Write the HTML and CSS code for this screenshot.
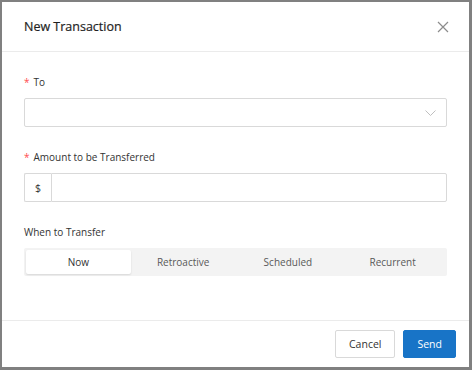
FILE: index.html
```html
<!DOCTYPE html>
<html lang="en">
<head>
  <meta charset="UTF-8">
  <title>New Transaction</title>
  <link rel="stylesheet" href="styles.css">
</head>
<body>

  <div class="modal">
    <!-- Header -->
    <div class="modal-header">
      <h2>New Transaction</h2>
      <span class="close-btn">
        <svg width="12" height="12" viewBox="0 0 12 12"><path d="M1 1L11 11M11 1L1 11" stroke="#8c8c8c" stroke-width="1.2" fill="none"/></svg>
      </span>
    </div>

    <!-- Form -->
    <div class="modal-body">
      <div class="form-item">
        <label><span class="req">*</span>To</label>
        <div class="select">
          <svg width="11" height="6" viewBox="0 0 11 6"><path d="M0.5 0.5L5.5 5.5L10.5 0.5" stroke="#bfbfbf" stroke-width="1" fill="none"/></svg>
        </div>
      </div>

      <div class="form-item">
        <label><span class="req">*</span>Amount to be Transferred</label>
        <div class="input-group">
          <span class="addon">$</span>
          <span class="input"></span>
        </div>
      </div>

      <div class="form-item">
        <label>When to Transfer</label>
        <div class="segmented">
          <span class="seg active">Now</span>
          <span class="seg">Retroactive</span>
          <span class="seg">Scheduled</span>
          <span class="seg">Recurrent</span>
        </div>
      </div>
    </div>

    <!-- Footer -->
    <div class="modal-footer">
      <button class="btn">Cancel</button>
      <button class="btn primary">Send</button>
    </div>
  </div>

</body>
</html>
```

FILE: styles.css
```css
* {
  margin: 0;
  padding: 0;
  box-sizing: border-box;
}

body {
  font-family: 'Open Sans', 'Noto Sans', sans-serif;
  background: #808080;
  padding: 2px 3px 3px 2px;
  height: 370px;
  color: #333;
}

.modal {
  background: #fff;
  height: 365px;
  display: flex;
  flex-direction: column;
}

/* Header */
.modal-header {
  height: 50px;
  display: flex;
  justify-content: space-between;
  align-items: center;
  padding: 0 20px 0 22px;
  border-bottom: 1px solid #ebebeb;
}

.modal-header h2 {
  font-size: 12.5px;
  font-weight: 500;
  color: #1f1f1f;
  -webkit-text-stroke: 0.2px #1f1f1f;
}

.close-btn {
  display: flex;
  cursor: pointer;
}

/* Body */
.modal-body {
  flex: 1;
  padding: 21px 22px 0 22px;
}

.form-item {
  margin-bottom: 21px;
}

.form-item label {
  display: block;
  font-size: 10px;
  line-height: 18px;
  color: #333;
  margin-bottom: 7px;
}

.req {
  color: #ff4d4f;
  margin-right: 4px;
}

.select {
  height: 29px;
  border: 1px solid #d9d9d9;
  border-radius: 2px;
  display: flex;
  align-items: center;
  justify-content: flex-end;
  padding-right: 10px;
}

.input-group {
  height: 29px;
  display: flex;
}

.addon {
  width: 27px;
  border: 1px solid #d9d9d9;
  border-right: none;
  border-radius: 2px 0 0 2px;
  display: flex;
  align-items: center;
  justify-content: center;
  font-size: 10.5px;
  color: #333;
}

.input {
  flex: 1;
  border: 1px solid #d9d9d9;
  border-radius: 0 2px 2px 0;
}

.segmented {
  height: 28px;
  background: #f3f3f3;
  border-radius: 2px;
  padding: 2px;
  display: grid;
  grid-template-columns: repeat(4, 1fr);
}

.seg {
  display: flex;
  align-items: center;
  justify-content: center;
  font-size: 10px;
  color: #595959;
  border-radius: 2px;
}

.seg.active {
  background: #fff;
  color: #333;
  box-shadow: 0 1px 2px rgba(0, 0, 0, 0.12);
}

/* Footer */
.modal-footer {
  height: 47px;
  border-top: 1px solid #ebebeb;
  display: flex;
  justify-content: flex-end;
  align-items: center;
  gap: 8px;
  padding: 0 13px;
}

.btn {
  font-family: inherit;
  height: 28px;
  padding: 0 13px;
  font-size: 10.5px;
  background: #fff;
  color: #333;
  border: 1px solid #d9d9d9;
  border-radius: 2px;
  cursor: pointer;
}

.btn.primary {
  background: #1874c7;
  border-color: #1874c7;
  color: #fff;
}
```
